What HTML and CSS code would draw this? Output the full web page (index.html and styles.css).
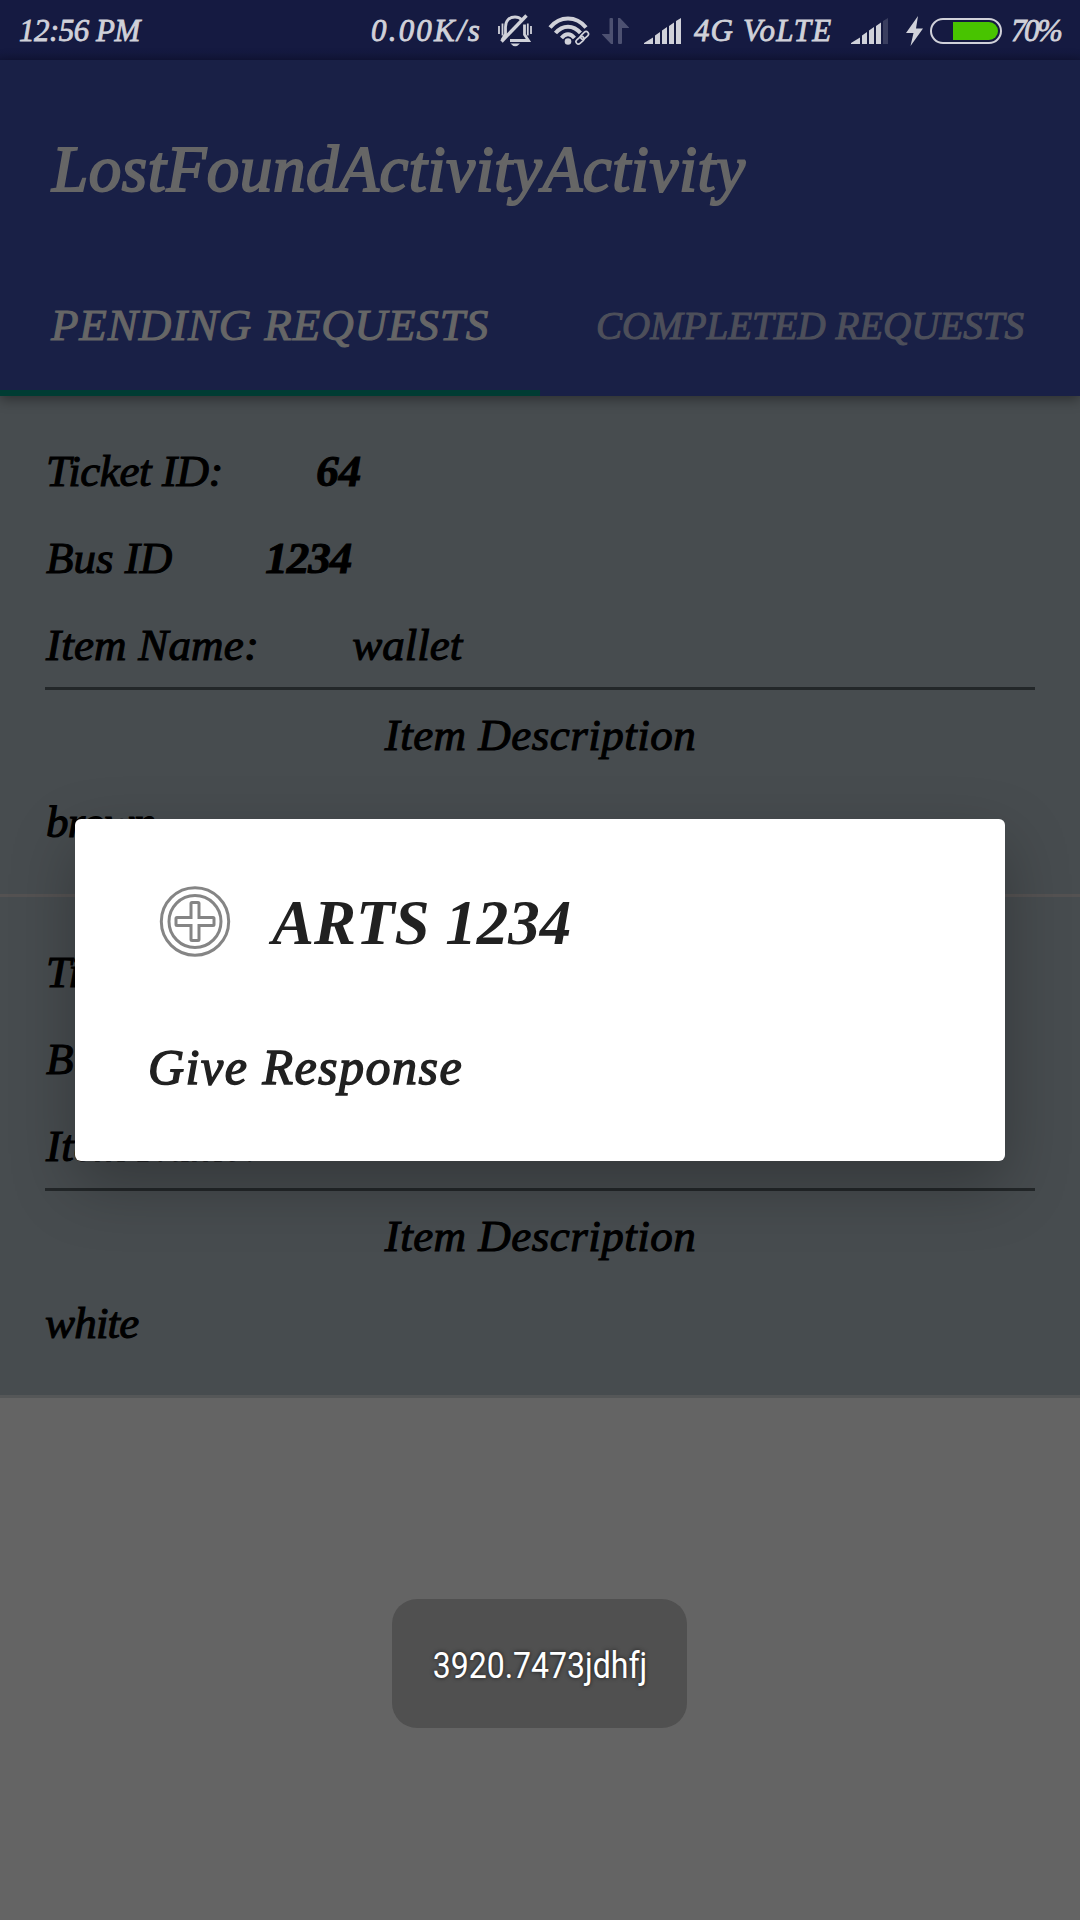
FILE: index.html
```html
<!DOCTYPE html>
<html lang="en">
<head>
<meta charset="utf-8">
<title>LostFoundActivity</title>
<link rel="stylesheet" href="styles.css">
</head>
<body>
<div class="screen">
  <div class="status">
    <span class="status-clock">12:56 PM</span>
    <span class="status-speed">0.00K/s</span>
    <svg class="icon" width="34" height="34" viewBox="0 0 34 34" fill="none" stroke="currentColor" stroke-width="2.800">
      <path d="M7.500 21V13C7.500 6.500 11.500 3 17 3C20 3 22 4 23.500 5.500M26.500 10.500V20.500L30.500 26.500H12M7.500 20L4 26"/>
      <path d="M28.500 1.500L3.500 27.500" stroke-width="3.400"/>
      <path d="M1 12v8M4.500 9.500v12M33 12v8M29.800 9.500v12" stroke-width="1.800"/>
      <path d="M12.500 29.500h9.500q-4.800 5.500-9.500 0z" fill="currentColor" stroke="none"/>
    </svg>
    <svg class="icon" width="42" height="30" viewBox="0 0 42 30" fill="none" stroke="currentColor">
      <path d="M2 11.500C12-.5 28-.5 38 11.500M7.500 17C14.500 8.500 25.500 8.500 32.500 17M13.500 22Q20 14.500 26.500 22" stroke-width="4"/>
      <circle cx="20" cy="25.500" r="3.300" fill="currentColor" stroke="none"/>
      <g stroke="#151a41" stroke-width="4"><rect x="32.500" y="17" width="8" height="4.500" rx="2.200" transform="rotate(-42 36.500 19.200)"/><rect x="28" y="22" width="8" height="4.500" rx="2.200" transform="rotate(-42 32 24.200)"/></g>
      <g stroke-width="1.700"><rect x="32" y="17" width="9" height="4.800" rx="2.400" transform="rotate(-42 36.500 19.400)"/><rect x="27.500" y="21.800" width="9" height="4.800" rx="2.400" transform="rotate(-42 32 24.200)"/></g>
    </svg>
    <svg class="icon icon-dim" width="28" height="26" viewBox="0 0 28 26" fill="currentColor">
      <path d="M7.500 1q0-1 1-1H10q1 0 1 1V26H9L0 16.500V16H7.500zM16 0h2L27 9.500V10H20V25q0 1-1 1H17q-1 0-1-1z"/>
    </svg>
    <svg class="icon" width="38" height="26" viewBox="0 0 38 26" fill="currentColor">
      <path d="M0 25L9 19.500V26H0zM11 17.500L16 14V26H11zM18 12.500L23 9V26H18zM25 8L30 4.500V26H25zM32 3L37 0V26H32z"/>
    </svg>
    <span class="status-net">4G VoLTE</span>
    <svg class="icon" width="38" height="26" viewBox="0 0 38 26" fill="currentColor">
      <path d="M0 25L9 19.500V26H0zM11 17.500L16 14V26H11zM18 12.500L23 9V26H18zM25 8L30 4.500V26H25z"/>
      <path d="M32 3L37 0V26H32z" opacity=".2"/>
    </svg>
    <svg class="icon" width="18" height="30" viewBox="0 0 18 30" fill="currentColor">
      <path d="M12 0L0 17H7.500L4.500 30L17 12.500H10z"/>
    </svg>
    <svg class="icon" width="72" height="26" viewBox="0 0 72 26">
      <rect x="1" y="1" width="70" height="24" rx="12" fill="none" stroke="currentColor" stroke-width="2"/>
      <path d="M23 4H59a9 9 0 0 1 0 18H23z" fill="#48c400"/>
    </svg>
    <span class="status-pct">70%</span>
  </div>

  <header class="appbar">
    <h1 class="appbar-title">LostFoundActivityActivity</h1>
    <nav class="tabs">
      <span class="tab tab-active">PENDING REQUESTS</span>
      <span class="tab tab-idle">COMPLETED REQUESTS</span>
    </nav>
    <div class="indicator"></div>
  </header>

  <main class="list">
    <article class="card">
      <div class="row"><span class="t-ticket">Ticket ID:</span><b>64</b></div>
      <div class="row"><span>Bus ID</span><b class="t-bus">1234</b></div>
      <div class="row"><span class="t-item">Item Name:</span><span>wallet</span></div>
      <hr class="rule">
      <div class="row row-center">Item Description</div>
      <div class="row t-text">brown</div>
    </article>
    <article class="card card-last">
      <div class="row"><span class="t-ticket">Ticket ID:</span></div>
      <div class="row"><span>Bus ID</span></div>
      <div class="row"><span class="t-item">Item Name:</span></div>
      <hr class="rule">
      <div class="row row-center">Item Description</div>
      <div class="row t-text t-white">white</div>
    </article>
  </main>

  <section class="dialog">
    <div class="dialog-head">
      <svg width="72" height="72" viewBox="0 0 72 72" fill="none" stroke="#858585">
        <circle cx="36" cy="36.500" r="33.700" stroke-width="3"/>
        <circle cx="36" cy="36.500" r="26" stroke-width="3"/>
        <path d="M33 17.500h6q1 0 1 1V32.500H54q1 0 1 1v6q0 1-1 1H40V54.500q0 1-1 1H33q-1 0-1-1V40.500H18q-1 0-1-1V33.500q0-1 1-1H32V18.500q0-1 1-1z" stroke-width="3"/>
      </svg>
      <h2 class="dialog-title">ARTS 1234</h2>
    </div>
    <div class="dialog-item">Give Response</div>
  </section>

  <div class="toast"><span class="toast-text">3920.7473jdhfj</span></div>
</div>
</body>
</html>
```
FILE: styles.css
```css
* { box-sizing: border-box; }
body { margin: 0; }

.screen {
  position: relative;
  width: 1080px;
  height: 1920px;
  overflow: hidden;
  background: #646464;
  font-family: "Liberation Serif", serif;
  font-style: italic;
  white-space: nowrap;
}

/* Status bar */
.status {
  display: grid;
  grid-template-columns: 352px 127px 50px 54px 42px 50px 157px 55px 24px 81px auto;
  align-items: center;
  height: 60px;
  padding-left: 19px;
  background: linear-gradient(#151a41 50px, #12163a 60px);
  color: #d0d1d9;
  font-size: 31px;
  line-height: 61px;
  -webkit-text-stroke: .8px currentColor;
}
.icon { display: block; -webkit-text-stroke: 0; }
.icon-dim { color: #4d5171; }
.status-clock { letter-spacing: -.5px; }
.status-speed { letter-spacing: 2.2px; }
.status-net { letter-spacing: 1.1px; }
.status-pct { letter-spacing: -2.5px; }

/* App bar */
.appbar {
  position: relative;
  height: 336px;
  background: #192046;
  color: #666;
  box-shadow: 0 3px 12px rgba(0, 0, 0, .4);
  -webkit-text-stroke: 1.1px currentColor;
}
.appbar-title {
  margin: 0;
  padding-left: 52px;
  font-size: 65px;
  font-weight: 400;
  line-height: 218px;
  letter-spacing: .6px;
  -webkit-text-stroke-width: 2px;
}
.tabs { display: flex; height: 112px; }
.tab { flex: 1; text-align: center; line-height: 95px; }
.tab-active { font-size: 45px; letter-spacing: .9px; }
.tab-idle { font-size: 39px; color: #4d4f5a; }
.indicator { width: 50%; height: 6px; background: #003c33; }

/* Request list */
.card {
  height: 501px;
  padding: 30px 45px 0;
  background: #474c4f;
  border-bottom: 3px solid #545252;
  color: #000;
  font-size: 45px;
  -webkit-text-stroke: 1.1px currentColor;
}
.card-last { border-color: #555758; }
.row {
  display: flex;
  gap: 93px;
  height: 87px;
  padding: 2px 0 0 1px;
  line-height: 87px;
}
.row-center { justify-content: center; letter-spacing: .5px; }
.t-ticket { letter-spacing: -.4px; }
.t-bus { letter-spacing: -1px; }
.t-item { letter-spacing: .2px; }
.t-text { letter-spacing: -.8px; }
.t-white { padding-left: 0; }
.rule { margin: 0; border: 0; height: 3px; background: #232729; }

/* Dialog over the list */
.dialog {
  position: absolute;
  left: 75px;
  top: 819px;
  width: 930px;
  height: 342px;
  border-radius: 6px;
  background: #fff;
  color: #212121;
  box-shadow: 0 24px 64px rgba(0, 0, 0, .27);
}
.dialog-head {
  display: flex;
  align-items: center;
  gap: 41px;
  height: 204px;
  padding-left: 84px;
}
.dialog-title {
  margin: 0;
  padding-top: 3px;
  font-size: 63px;
  line-height: 84px;
}
.dialog-item {
  padding-left: 73px;
  font-size: 50px;
  line-height: 88px;
  letter-spacing: 1.5px;
  -webkit-text-stroke: 1.5px currentColor;
}

/* Toast */
.toast {
  position: absolute;
  left: 392px;
  top: 1599px;
  width: 295px;
  height: 129px;
  display: flex;
  align-items: center;
  justify-content: center;
  padding-top: 4px;
  border-radius: 25px;
  background: #505050;
}
.toast-text {
  font: 37px/60px Roboto, sans-serif;
  color: #fff;
  text-shadow: 0 0 5px rgba(0, 0, 0, .7);
  transform: scaleX(.865);
}
```
